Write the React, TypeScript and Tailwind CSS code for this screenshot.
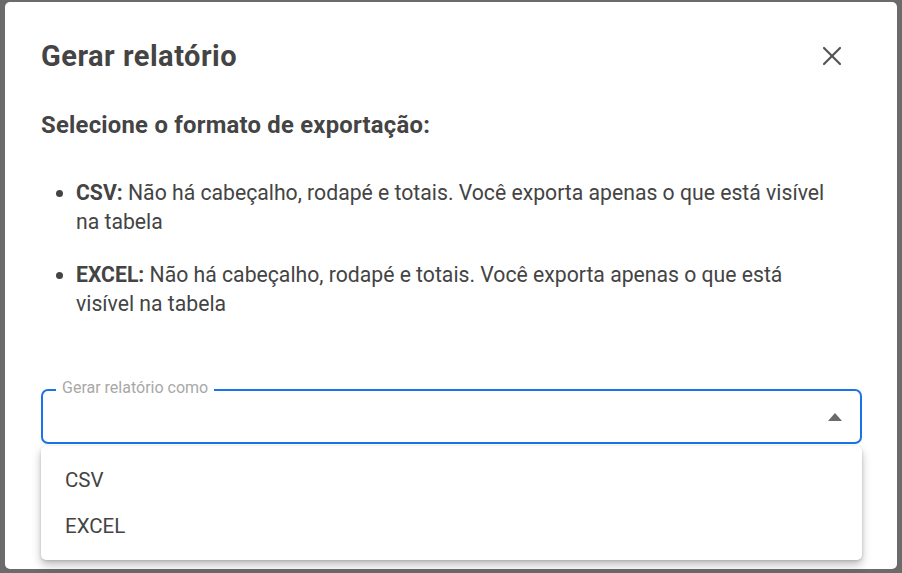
import { X } from 'lucide-react';

const items = [
  { label: 'CSV:', text: 'Não há cabeçalho, rodapé e totais. Você exporta apenas o que está visível na tabela' },
  { label: 'EXCEL:', text: 'Não há cabeçalho, rodapé e totais. Você exporta apenas o que está visível na tabela' },
];

export default function App() {
  return (
    <div
      className="w-[902px] h-[573px] bg-[#6b6b6b] pl-[5px] pr-[5px] pt-[2px] overflow-hidden"
      style={{ fontFamily: 'Roboto, "Noto Sans", sans-serif' }}
    >
      <div className="w-[892px] h-[567px] bg-white rounded-[5px] pl-[36px] pr-[35px] text-[#444444]">
        <div className="flex items-center justify-between pt-[37px]">
          <h2 className="text-[29px] font-bold leading-[34px] tracking-[0.5px]">Gerar relatório</h2>
          <button className="mr-[14px] text-[#555555]">
            <X size={32} strokeWidth={1.6} />
          </button>
        </div>

        <p className="mt-[37px] text-[23.8px] font-bold leading-[30px] tracking-[0.25px]">Selecione o formato de exportação:</p>

        <ul className="mt-[38px] pl-[35px] pr-[20px] list-disc text-[21.2px] leading-[29px] space-y-[24px]">
          {items.map((item) => (
            <li key={item.label}>
              <span className="font-bold">{item.label}</span> {item.text}
            </li>
          ))}
        </ul>

        <div className="relative mt-[71px]">
          <div className="h-[55px] border-2 border-[#1a73e8] rounded-[7px] flex items-center justify-end pr-[18px]">
            <svg width="14" height="8" viewBox="0 0 14 8">
              <path d="M0 8 L7 0 L14 8 Z" fill="#6b6b6b" />
            </svg>
          </div>
          <span className="absolute left-[15px] top-[-11px] px-[6px] bg-white text-[16px] leading-[20px] text-[#a8a8a8]">
            Gerar relatório como
          </span>
          <div className="absolute left-0 right-0 top-[57px] bg-white rounded-[5px] shadow-[0_5px_10px_rgba(0,0,0,0.25),0_1px_3px_rgba(0,0,0,0.15)] py-[11px]">
            <div className="px-[24px] h-[46px] flex items-center text-[20.5px]">CSV</div>
            <div className="px-[24px] h-[46px] flex items-center text-[20.5px]">EXCEL</div>
          </div>
        </div>
      </div>
    </div>
  );
}
